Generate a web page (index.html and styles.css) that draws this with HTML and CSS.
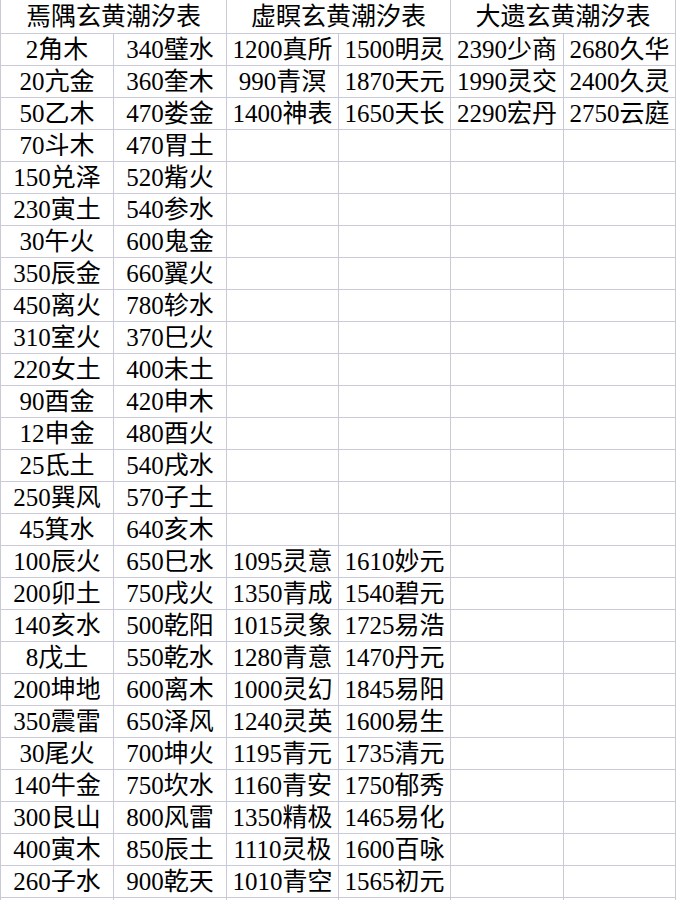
FILE: index.html
```html
<!DOCTYPE html>
<html lang="zh">
<head>
<meta charset="utf-8">
<link rel="stylesheet" href="styles.css">
</head>
<body>
<div class="sheet">
  <div class="cell head">焉隅玄黄潮汐表</div>
  <div class="cell head">虚瞑玄黄潮汐表</div>
  <div class="cell head">大遗玄黄潮汐表</div>

  <div class="cell">2角木</div><div class="cell">340璧水</div><div class="cell">1200真所</div><div class="cell">1500明灵</div><div class="cell">2390少商</div><div class="cell">2680久华</div>
  <div class="cell">20亢金</div><div class="cell">360奎木</div><div class="cell">990青溟</div><div class="cell">1870天元</div><div class="cell">1990灵交</div><div class="cell">2400久灵</div>
  <div class="cell">50乙木</div><div class="cell">470娄金</div><div class="cell">1400神表</div><div class="cell">1650天长</div><div class="cell">2290宏丹</div><div class="cell">2750云庭</div>
  <div class="cell">70斗木</div><div class="cell">470胃土</div><div class="cell"></div><div class="cell"></div><div class="cell"></div><div class="cell"></div>
  <div class="cell">150兑泽</div><div class="cell">520觜火</div><div class="cell"></div><div class="cell"></div><div class="cell"></div><div class="cell"></div>
  <div class="cell">230寅土</div><div class="cell">540参水</div><div class="cell"></div><div class="cell"></div><div class="cell"></div><div class="cell"></div>
  <div class="cell">30午火</div><div class="cell">600鬼金</div><div class="cell"></div><div class="cell"></div><div class="cell"></div><div class="cell"></div>
  <div class="cell">350辰金</div><div class="cell">660翼火</div><div class="cell"></div><div class="cell"></div><div class="cell"></div><div class="cell"></div>
  <div class="cell">450离火</div><div class="cell">780轸水</div><div class="cell"></div><div class="cell"></div><div class="cell"></div><div class="cell"></div>
  <div class="cell">310室火</div><div class="cell">370巳火</div><div class="cell"></div><div class="cell"></div><div class="cell"></div><div class="cell"></div>
  <div class="cell">220女土</div><div class="cell">400未土</div><div class="cell"></div><div class="cell"></div><div class="cell"></div><div class="cell"></div>
  <div class="cell">90酉金</div><div class="cell">420申木</div><div class="cell"></div><div class="cell"></div><div class="cell"></div><div class="cell"></div>
  <div class="cell">12申金</div><div class="cell">480酉火</div><div class="cell"></div><div class="cell"></div><div class="cell"></div><div class="cell"></div>
  <div class="cell">25氐土</div><div class="cell">540戌水</div><div class="cell"></div><div class="cell"></div><div class="cell"></div><div class="cell"></div>
  <div class="cell">250巽风</div><div class="cell">570子土</div><div class="cell"></div><div class="cell"></div><div class="cell"></div><div class="cell"></div>
  <div class="cell">45箕水</div><div class="cell">640亥木</div><div class="cell"></div><div class="cell"></div><div class="cell"></div><div class="cell"></div>
  <div class="cell">100辰火</div><div class="cell">650巳水</div><div class="cell">1095灵意</div><div class="cell">1610妙元</div><div class="cell"></div><div class="cell"></div>
  <div class="cell">200卯土</div><div class="cell">750戌火</div><div class="cell">1350青成</div><div class="cell">1540碧元</div><div class="cell"></div><div class="cell"></div>
  <div class="cell">140亥水</div><div class="cell">500乾阳</div><div class="cell">1015灵象</div><div class="cell">1725易浩</div><div class="cell"></div><div class="cell"></div>
  <div class="cell">8戊土</div><div class="cell">550乾水</div><div class="cell">1280青意</div><div class="cell">1470丹元</div><div class="cell"></div><div class="cell"></div>
  <div class="cell">200坤地</div><div class="cell">600离木</div><div class="cell">1000灵幻</div><div class="cell">1845易阳</div><div class="cell"></div><div class="cell"></div>
  <div class="cell">350震雷</div><div class="cell">650泽风</div><div class="cell">1240灵英</div><div class="cell">1600易生</div><div class="cell"></div><div class="cell"></div>
  <div class="cell">30尾火</div><div class="cell">700坤火</div><div class="cell">1195青元</div><div class="cell">1735清元</div><div class="cell"></div><div class="cell"></div>
  <div class="cell">140牛金</div><div class="cell">750坎水</div><div class="cell">1160青安</div><div class="cell">1750郁秀</div><div class="cell"></div><div class="cell"></div>
  <div class="cell">300艮山</div><div class="cell">800风雷</div><div class="cell">1350精极</div><div class="cell">1465易化</div><div class="cell"></div><div class="cell"></div>
  <div class="cell">400寅木</div><div class="cell">850辰土</div><div class="cell">1110灵极</div><div class="cell">1600百咏</div><div class="cell"></div><div class="cell"></div>
  <div class="cell">260子水</div><div class="cell">900乾天</div><div class="cell">1010青空</div><div class="cell">1565初元</div><div class="cell"></div><div class="cell"></div>
  <div class="cell"></div><div class="cell"></div><div class="cell"></div><div class="cell"></div><div class="cell"></div><div class="cell"></div>
</div>
</body>
</html>
```
FILE: styles.css
```css
html, body {
  margin: 0;
  padding: 0;
  background: #ffffff;
  overflow: hidden;
}

.sheet {
  display: grid;
  grid-template-columns: 113px 113px 112px 112px 113px 112px;
  grid-auto-rows: 32px;
  grid-template-rows: 34px;
  width: 676px;
  border-left: 1px solid #cacad6;
  box-sizing: border-box;
  font-family: "Liberation Serif", "Noto Sans CJK SC", serif;
  font-size: 25px;
  color: #000000;
}

.cell {
  box-sizing: border-box;
  border-right: 1px solid #cacad6;
  border-bottom: 1px solid #cacad6;
  display: flex;
  align-items: flex-end;
  justify-content: center;
  white-space: nowrap;
  line-height: 31px;
  overflow: visible;
}

.head {
  grid-column: span 2;
  line-height: 33px;
  align-items: center;
}
```
